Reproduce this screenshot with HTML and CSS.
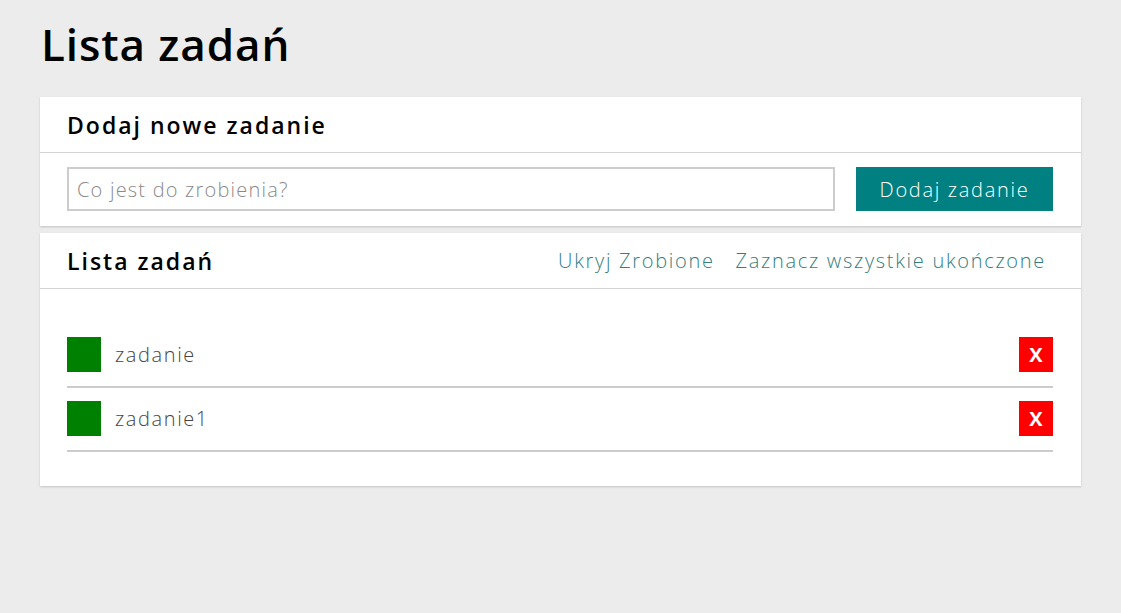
FILE: index.html
```html
<!DOCTYPE html>
<html lang="pl">
<head>
<meta charset="utf-8">
<title>Lista zadań</title>
<link rel="stylesheet" href="styles.css">
</head>
<body>
<main class="app">
  <h1 class="title">Lista zadań</h1>

  <section class="card">
    <header class="card-head">
      <h2 class="card-title">Dodaj nowe zadanie</h2>
    </header>
    <form class="add-form">
      <input class="task-input" type="text" placeholder="Co jest do zrobienia?">
      <button class="add-btn" type="button">Dodaj zadanie</button>
    </form>
  </section>

  <section class="card">
    <header class="card-head">
      <h2 class="card-title">Lista zadań</h2>
      <nav class="actions">
        <a class="action">Ukryj Zrobione</a>
        <a class="action">Zaznacz wszystkie ukończone</a>
      </nav>
    </header>
    <ul class="tasks">
      <li class="task">
        <span class="check"></span>
        <span class="task-name">zadanie</span>
        <button class="del" type="button">X</button>
      </li>
      <li class="task">
        <span class="check"></span>
        <span class="task-name">zadanie1</span>
        <button class="del" type="button">X</button>
      </li>
    </ul>
  </section>
</main>
</body>
</html>
```

FILE: styles.css
```css
* { box-sizing: border-box; }

html, body {
  margin: 0;
  padding: 0;
  background: #ececec;
}

body {
  font-family: "Open Sans", "DejaVu Sans", sans-serif;
  color: #000;
}

.app {
  padding: 0 40px;
}

.title {
  margin: 0;
  padding: 14px 0 0 1px;
  height: 97px;
  font-size: 44px;
  font-weight: 600;
  line-height: 60px;
  letter-spacing: 0.9px;
}

.card {
  background: #fff;
  box-shadow: 0 1px 2px rgba(0,0,0,0.18);
  margin-bottom: 7px;
}

.card-head {
  display: flex;
  align-items: center;
  justify-content: space-between;
  height: 56px;
  padding: 0 35px 0 27px;
  border-bottom: 1px solid #d4d4d4;
}

.card-title {
  margin: 0;
  font-size: 23px;
  font-weight: 600;
  letter-spacing: 2px;
}

.add-form {
  display: flex;
  gap: 21px;
  padding: 14px 28px 15px 27px;
}

.task-input {
  flex: 1;
  height: 44px;
  border: 2px solid #cccccc;
  padding: 0 8px;
  font-family: inherit;
  font-size: 20px;
  font-weight: 300;
  letter-spacing: 1.2px;
  color: #444;
  outline: none;
}

.task-input::placeholder {
  color: #8a8a8a;
}

.add-btn {
  width: 197px;
  height: 44px;
  border: none;
  background: #008080;
  color: #fff;
  font-family: inherit;
  font-size: 20px;
  font-weight: 300;
  letter-spacing: 1.7px;
  padding: 0;
}

.actions {
  display: flex;
  gap: 21px;
}

.action {
  font-size: 20px;
  font-weight: 300;
  letter-spacing: 1.7px;
  color: #337e7f;
}

.tasks {
  list-style: none;
  margin: 0;
  padding: 35px 28px 34px 27px;
}

.task {
  display: flex;
  align-items: center;
  gap: 14px;
  padding: 13px 0 14px;
  border-bottom: 2px solid #cccccc;
}

.check {
  width: 34px;
  height: 35px;
  background: #008000;
  flex: none;
}

.task-name {
  flex: 1;
  font-size: 20px;
  font-weight: 300;
  letter-spacing: 1.6px;
  line-height: 35px;
  color: #444;
}

.del {
  width: 34px;
  height: 35px;
  border: none;
  padding: 0;
  background: #ff0000;
  color: #fff;
  font-family: inherit;
  font-size: 20px;
  font-weight: 700;
}
```
